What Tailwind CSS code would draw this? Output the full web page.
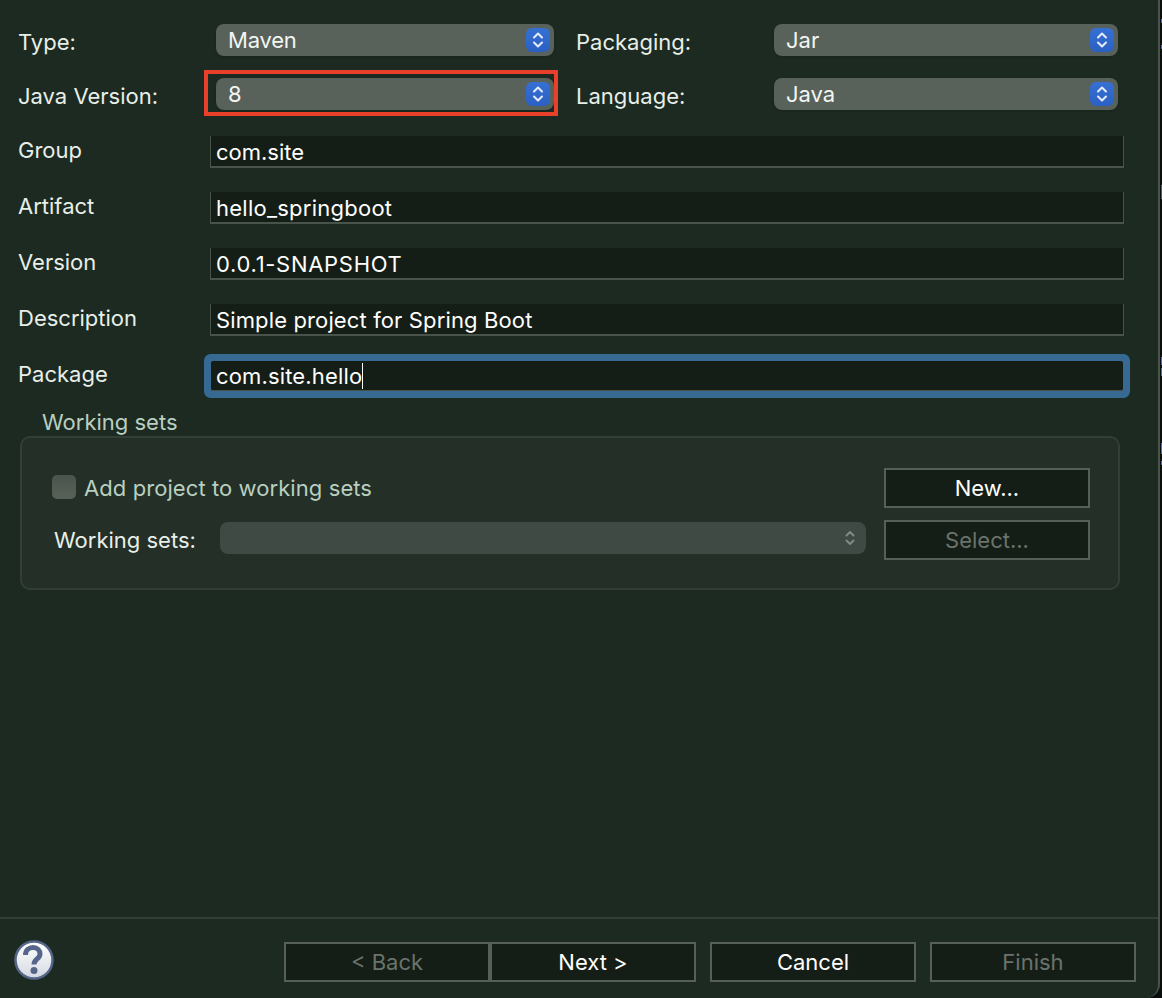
<!DOCTYPE html>
<html lang="en">
<head>
    <meta charset="UTF-8">
    <title>New Spring Starter Project</title>
    <script src="https://cdn.jsdelivr.net/npm/@tailwindcss/browser@4"></script>
</head>
<body class="bg-[#0c0d0d] font-['Inter','Liberation_Sans',sans-serif] text-[22px] text-[#e8efe9] h-[998px] w-[1162px] overflow-hidden relative">
    <!-- bits of the desktop showing behind the window edge -->
    <div class="absolute left-[1161px] top-[19px] w-[1px] h-[4px] bg-[#5a6aa0]"></div>
    <div class="absolute left-[1161px] top-[45px] w-[1px] h-[4px] bg-[#5a6aa0]"></div>
    <div class="absolute left-[1161px] top-[185px] w-[1px] h-[14px] bg-[#555a5c]"></div>
    <div class="absolute left-[1161px] top-[357px] w-[1px] h-[8px] bg-[#5a6aa0]"></div>
    <div class="absolute left-[1161px] top-[368px] w-[1px] h-[8px] bg-[#5a6aa0]"></div>
    <div class="absolute left-[1161px] top-[443px] w-[1px] h-[11px] bg-[#5a6aa0]"></div>
    <div class="absolute left-[1161px] top-[461px] w-[1px] h-[4px] bg-[#5a6aa0]"></div>

    <div class="relative h-full w-[1160px] flex flex-col bg-[#1c2a21] border-r-2 border-[#48534a] rounded-br-[14px]">
        <!-- highlight drawn over the java version select -->
        <div class="absolute left-[204px] top-[70px] w-[354px] h-[46px] border-4 border-[#e8402a]"></div>

        <div class="flex-1 pt-6">
            <div class="flex h-8 items-center">
                <span class="w-[216px] pl-[18px] mt-[4px]">Type:</span>
                <div class="w-[338px] h-8 bg-[#58625a] rounded-lg flex items-center justify-between pl-3 pr-1 shadow-sm">
                    <span class="text-[#f2f5f2] tracking-[-0.2px]">Maven</span>
                    <span class="w-6 h-6 rounded-md bg-linear-to-b from-[#3670d4] to-[#2b60c2] flex items-center justify-center">
                        <svg width="14" height="18" viewBox="0 0 14 18" fill="none" stroke="#e4ecfb" stroke-width="2" stroke-linecap="round" stroke-linejoin="round"><path d="M3 6.500 7 2.500 11 6.500M3 11.500 7 15.500 11 11.500"/></svg>
                    </span>
                </div>
                <span class="w-[220px] pl-[22px] mt-[4px]">Packaging:</span>
                <div class="w-[344px] h-8 bg-[#58625a] rounded-lg flex items-center justify-between pl-3 pr-1 shadow-sm">
                    <span class="text-[#f2f5f2]">Jar</span>
                    <span class="w-6 h-6 rounded-md bg-linear-to-b from-[#3670d4] to-[#2b60c2] flex items-center justify-center">
                        <svg width="14" height="18" viewBox="0 0 14 18" fill="none" stroke="#e4ecfb" stroke-width="2" stroke-linecap="round" stroke-linejoin="round"><path d="M3 6.500 7 2.500 11 6.500M3 11.500 7 15.500 11 11.500"/></svg>
                    </span>
                </div>
            </div>
            <div class="flex h-8 items-center mt-[22px]">
                <span class="w-[216px] pl-[18px] mt-[4px]">Java Version:</span>
                <div class="w-[338px] h-8 bg-[#58625a] rounded-lg flex items-center justify-between pl-3 pr-1 shadow-sm">
                    <span class="text-[#f2f5f2]">8</span>
                    <span class="w-6 h-6 rounded-md bg-linear-to-b from-[#3670d4] to-[#2b60c2] flex items-center justify-center">
                        <svg width="14" height="18" viewBox="0 0 14 18" fill="none" stroke="#e4ecfb" stroke-width="2" stroke-linecap="round" stroke-linejoin="round"><path d="M3 6.500 7 2.500 11 6.500M3 11.500 7 15.500 11 11.500"/></svg>
                    </span>
                </div>
                <span class="w-[220px] pl-[22px] mt-[4px]">Language:</span>
                <div class="w-[344px] h-8 bg-[#58625a] rounded-lg flex items-center justify-between pl-3 pr-1 shadow-sm">
                    <span class="text-[#f2f5f2]">Java</span>
                    <span class="w-6 h-6 rounded-md bg-linear-to-b from-[#3670d4] to-[#2b60c2] flex items-center justify-center">
                        <svg width="14" height="18" viewBox="0 0 14 18" fill="none" stroke="#e4ecfb" stroke-width="2" stroke-linecap="round" stroke-linejoin="round"><path d="M3 6.500 7 2.500 11 6.500M3 11.500 7 15.500 11 11.500"/></svg>
                    </span>
                </div>
            </div>

            <div class="mt-[26px] flex flex-col gap-6">
                <div class="flex h-8">
                    <span class="w-[210px] pl-[18px] -mt-[2px]">Group</span>
                    <div class="w-[914px] bg-[#151e16] border-l border-r border-b-2 border-[#48534a] pl-[5px] text-white leading-8">com.site</div>
                </div>
                <div class="flex h-8">
                    <span class="w-[210px] pl-[18px] -mt-[2px]">Artifact</span>
                    <div class="w-[914px] bg-[#151e16] border-l border-r border-b-2 border-[#48534a] pl-[5px] text-white leading-8 tracking-[0.25px]">hello_springboot</div>
                </div>
                <div class="flex h-8">
                    <span class="w-[210px] pl-[18px] -mt-[2px]">Version</span>
                    <div class="w-[914px] bg-[#151e16] border-l border-r border-b-2 border-[#48534a] pl-[5px] text-white leading-8 tracking-[0.7px]">0.0.1-SNAPSHOT</div>
                </div>
                <div class="flex h-8">
                    <span class="w-[210px] pl-[18px] -mt-[2px]">Description</span>
                    <div class="w-[914px] bg-[#151e16] border-l border-r border-b-2 border-[#48534a] pl-[5px] text-white leading-8 tracking-[0.13px]">Simple project for Spring Boot</div>
                </div>
                <div class="flex h-8">
                    <span class="w-[211px] pl-[18px] -mt-[2px]">Package</span>
                    <div class="w-[912px] h-[30px] mt-[1px] bg-[#151e16] border-b border-[#48534a] pl-[5px] text-white leading-[30px] rounded-[2px] shadow-[0_0_0_7px_#366a93] flex items-center">
                        <span class="tracking-[0.15px]">com.site.hello</span><span class="w-[1px] h-[26px] bg-white"></span>
                    </div>
                </div>
            </div>

            <div class="ml-[20px] mt-[17px] w-[1100px]">
                <div class="pl-[22px] text-[#b9cfc0] leading-[27px]">Working sets</div>
                <div class="h-[154px] bg-[#232f27] border-2 border-[#323e36] rounded-[10px] pl-[30px] pr-[28px] pt-[30px] flex gap-[18px]">
                    <div class="w-[814px]">
                        <div class="flex h-10 items-center gap-[8px]">
                            <span class="w-6 h-6 rounded-[5px] bg-linear-to-b from-[#4a544c] to-[#586259] -mt-[2px]"></span>
                            <span class="text-[#b9cfc0] tracking-[0.08px]">Add project to working sets</span>
                        </div>
                        <div class="flex items-center mt-[14px] h-8">
                            <span class="w-[168px] pl-[2px] mt-[4px]">Working sets:</span>
                            <div class="w-[646px] h-8 bg-[#3e4a43] rounded-lg flex items-center justify-end pr-[10px]">
                                <svg width="12" height="18" viewBox="0 0 12 18" fill="none" stroke="#7f8a82" stroke-width="2" stroke-linecap="round" stroke-linejoin="round"><path d="M2.500 6.500 6 3 9.500 6.500M2.500 11.500 6 15 9.500 11.500"/></svg>
                            </div>
                        </div>
                    </div>
                    <div class="flex flex-col gap-3">
                        <div class="w-[206px] h-10 bg-[#151e16] border-2 border-[#566059] flex items-center justify-center text-white">New...</div>
                        <div class="w-[206px] h-10 bg-[#151e16] border-2 border-[#566059] flex items-center justify-center text-[#6a736c]">Select...</div>
                    </div>
                </div>
            </div>
        </div>

        <div class="h-[81px] border-t-2 border-[#323e36] flex items-start pt-[23px] pl-[14px]">
            <svg width="40" height="40" viewBox="0 0 40 40" class="-mt-[2px]">
                <defs><linearGradient id="helpfill" x1="0" y1="0" x2="0" y2="1"><stop offset="0" stop-color="#ffffff"/><stop offset="1" stop-color="#d5d9e2"/></linearGradient></defs>
                <circle cx="20" cy="20" r="18.500" fill="url(#helpfill)" stroke="#56668a" stroke-width="2.500"/>
                <path d="M11.500 15C11.500 10 15 7.500 19 7.500C23.500 7.500 26 10.500 26 14C26 19 20 19 20 24.500" fill="none" stroke="#56668a" stroke-width="5"/>
                <circle cx="20" cy="30.500" r="3.500" fill="#56668a"/>
            </svg>
            <div class="flex ml-[230px]">
                <div class="w-[206px] h-10 bg-[#151e16] border-2 border-[#566059] flex items-center justify-center text-[#6a736c]">&lt; Back</div>
                <div class="w-[206px] h-10 bg-[#151e16] border-2 border-[#566059] flex items-center justify-center text-white">Next &gt;</div>
                <div class="w-[206px] h-10 ml-[14px] bg-[#151e16] border-2 border-[#566059] flex items-center justify-center text-white">Cancel</div>
                <div class="w-[206px] h-10 ml-[14px] bg-[#151e16] border-2 border-[#566059] flex items-center justify-center text-[#6a736c]">Finish</div>
            </div>
        </div>
    </div>
</body>
</html>
